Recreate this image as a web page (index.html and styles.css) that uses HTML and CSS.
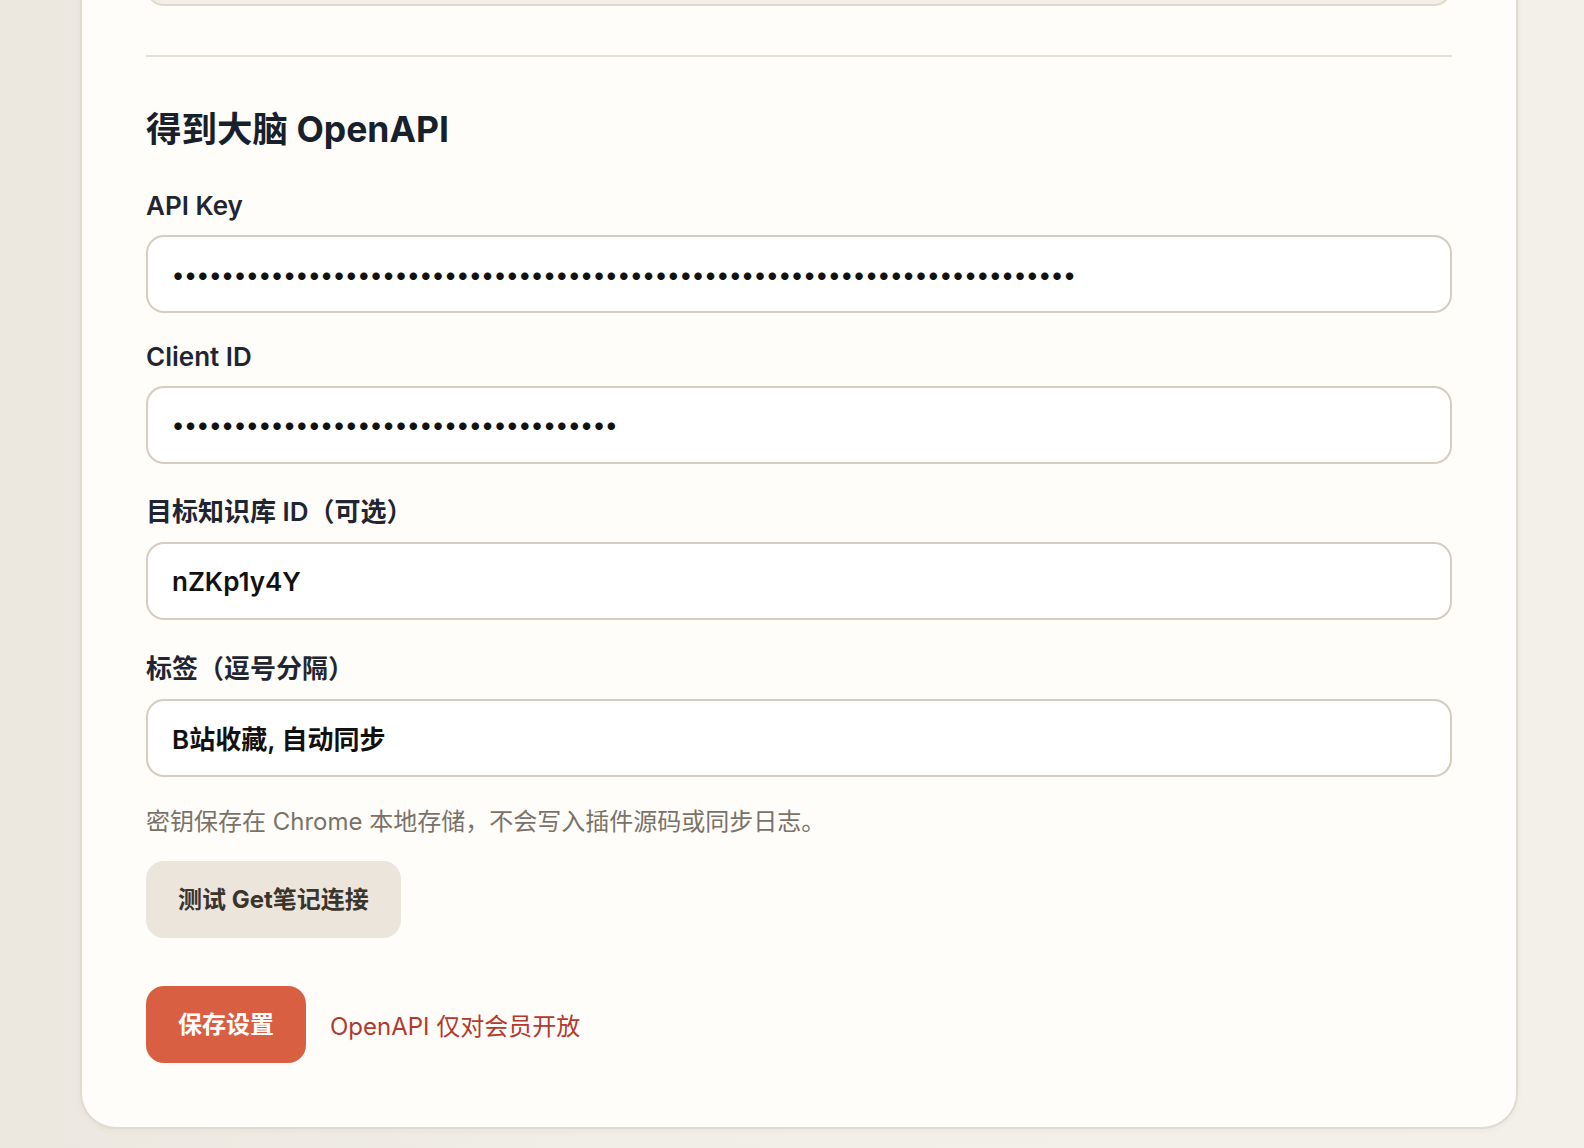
FILE: index.html
```html
<!DOCTYPE html>
<html lang="zh-CN">
<head>
  <meta charset="UTF-8">
  <title>设置</title>
  <meta name="viewport" content="width=device-width, initial-scale=1.0">
  <link rel="stylesheet" href="styles.css">
</head>
<body>

  <div class="card">
    <div class="field">
      <label class="label" for="serverUrl">服务地址</label>
      <input class="input readonly" id="serverUrl" type="text" value="" readonly>
    </div>

    <hr class="divider">

    <h2 class="section-title">得到大脑 OpenAPI</h2>

    <div class="field">
      <label class="label" for="apiKey">API Key</label>
      <input class="input" id="apiKey" type="password" value="gk_live_8f2a91c4d7e6b0a35c19f8e2d4b7a6c0e3f5d9a1b8c2e7f40d6a9c3b5e1f8a2d7">
    </div>

    <div class="field">
      <label class="label" for="clientId">Client ID</label>
      <input class="input" id="clientId" type="password" value="cli_3e9a7b1d5f2c8e4a6b0d9f7c1e3a5b2d">
    </div>

    <div class="field">
      <label class="label" for="kbId">目标知识库 ID（可选）</label>
      <input class="input" id="kbId" type="text" value="nZKp1y4Y">
    </div>

    <div class="field">
      <label class="label" for="tags">标签（逗号分隔）</label>
      <input class="input" id="tags" type="text" value="B站收藏, 自动同步">
    </div>

    <p class="hint">密钥保存在 Chrome 本地存储，不会写入插件源码或同步日志。</p>

    <button class="btn btn-soft" onclick="testConnection()">测试 Get笔记连接</button>

    <div class="actions">
      <button class="btn btn-primary" onclick="saveSettings()">保存设置</button>
      <span class="status">OpenAPI 仅对会员开放</span>
    </div>
  </div>

  <script>
    function testConnection() {
      document.querySelector('.status').textContent = '正在测试连接…';
    }

    function saveSettings() {
      document.querySelector('.status').textContent = 'OpenAPI 仅对会员开放';
    }
  </script>

</body>
</html>
```

FILE: styles.css
```css
html {
  overflow: hidden;
}
body {
  font-family: Inter, "Noto Sans CJK SC", sans-serif;
  background: linear-gradient(90deg, #ece8e0 0%, #f2efe9 50%, #f3f0ea 100%);
  margin: 0;
  padding: 0;
  color: #1b222c;
}
.card {
  width: 1306px;
  margin: -189px 0 16px 80px;
  padding: 64px;
  background: #fefdf9;
  border: 2px solid #e1dacf;
  border-radius: 36px;
  box-shadow: 0 2px 6px rgba(60, 50, 30, 0.04);
}
.field {
  margin-bottom: 27.5px;
}
.label {
  display: block;
  margin-bottom: 14px;
  font-size: 26px;
  font-weight: 600;
  color: #1f2631;
}
.input {
  display: block;
  box-sizing: border-box;
  width: 100%;
  height: 78px;
  padding: 0 24px;
  font-family: inherit;
  font-size: 26px;
  font-weight: 600;
  color: #111;
  background: #fff;
  border: 2px solid #d6cdc0;
  border-radius: 18px;
  outline: none;
}
.input[type="password"] {
  font-size: 24px;
  letter-spacing: 0.3px;
}
.readonly {
  background: #f3efe8;
  border-color: #e0d9cd;
}
.divider {
  margin: 49px 0 0;
  border: none;
  border-top: 2px solid #e6e0d6;
}
.section-title {
  margin: 44px 0 38px;
  font-size: 35.5px;
  font-weight: 700;
  color: #17202b;
}
.hint {
  margin: -2px 0 24px;
  font-size: 24px;
  color: #7a7268;
}
.btn {
  display: inline-block;
  padding: 20px 32px;
  font-family: inherit;
  font-size: 24px;
  line-height: 37px;
  font-weight: 700;
  border: none;
  border-radius: 18px;
  cursor: pointer;
}
.btn-soft {
  background: #ebe5dc;
  color: #3a342c;
}
.btn-soft:hover {
  background: #e3dcd1;
}
.actions {
  display: flex;
  align-items: center;
  gap: 24px;
  margin-top: 48px;
}
.btn-primary {
  background: #d95f43;
  color: #fff;
}
.btn-primary:hover {
  background: #c9533a;
}
.status {
  font-size: 24px;
  color: #b3392d;
}
```
